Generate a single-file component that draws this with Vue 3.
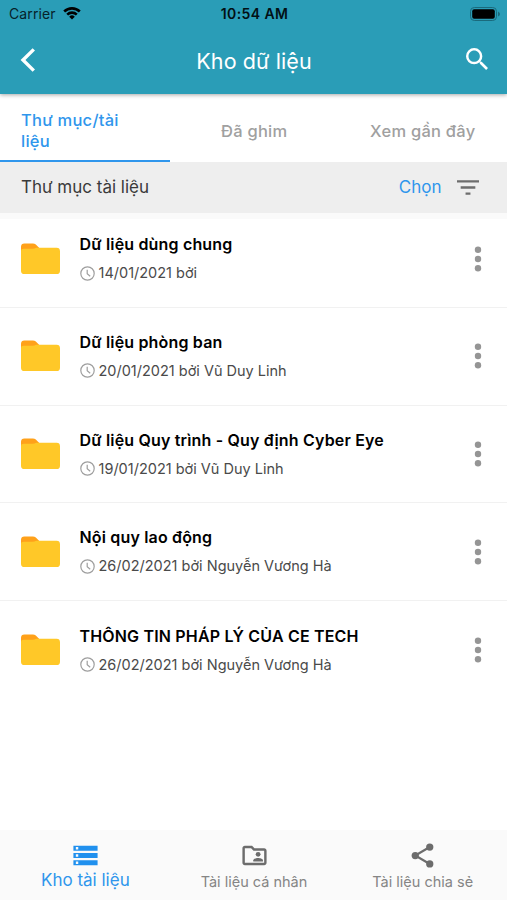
<template>
  <div class="screen">
    <header class="header">
      <div class="status">
        <div class="carrier">
          <span>Carrier</span>
          <svg class="wifi" viewBox="0 0 18 14">
            <path d="M0.3 4.6a12.4 12.4 0 0 1 17.4 0l-1.8 1.9a9.8 9.8 0 0 0-13.8 0z" />
            <path d="M3.3 7.7a8.1 8.1 0 0 1 11.4 0l-1.8 1.9a5.5 5.5 0 0 0-7.8 0z" />
            <path d="M6.2 10.7a4 4 0 0 1 5.6 0L9 13.6z" />
          </svg>
        </div>
        <span class="clock">10:54 AM</span>
        <svg class="battery" viewBox="0 0 30 14">
          <rect class="shell" x="0.5" y="0.5" width="26" height="13" rx="3.8" />
          <rect x="2.2" y="2.2" width="22.6" height="9.6" rx="2" />
          <path class="tip" d="M28 4.5q2 1 2 2.5t-2 2.5z" />
        </svg>
      </div>
      <div class="navbar">
        <svg class="back" viewBox="0 0 16 24">
          <path d="M13.8 1.4L3 12l10.800 10.600" />
        </svg>
        <h1>Kho dữ liệu</h1>
        <svg class="search" viewBox="3 3 17.5 17.5">
          <path d="M15.5 14h-.79l-.28-.27A6.471 6.471 0 0 0 16 9.5 6.5 6.5 0 1 0 9.5 16c1.61 0 3.09-.59 4.23-1.57l.27.28v.79l5 4.99L20.49 19l-4.99-5zm-6 0C7.01 14 5 11.99 5 9.5S7.01 5 9.5 5 14 7.01 14 9.5 11.99 14 9.5 14z" />
        </svg>
      </div>
    </header>

    <nav class="tabs">
      <div v-for="(tab, i) in tabs" :key="tab" class="tab" :class="{ active: i === activeTab }" @click="activeTab = i">
        <span>{{ tab }}</span>
      </div>
    </nav>

    <div class="toolbar">
      <span class="path">Thư mục tài liệu</span>
      <span class="select">Chọn</span>
      <svg class="filter" viewBox="3 6 18 12">
        <path d="M10 18h4v-2h-4v2zM3 6v2h18V6H3zm3 7h12v-2H6v2z" />
      </svg>
    </div>

    <main class="list">
      <div v-for="folder in folders" :key="folder.name" class="row">
        <svg class="folder" viewBox="0 0 40 32">
          <path class="flap" d="M0 10V3.5Q0 0 3.5 0h8.7q1.800 0 3 1.200L19 5v5z" />
          <path class="body" d="M0 8Q0 5.500 3 5.500L12 5.500Q14 5.500 15.500 4.500H36.500Q40 4.500 40 8V28Q40 31.500 36.500 31.500H3.500Q0 31.500 0 28z" />
        </svg>
        <div class="info">
          <div class="name">{{ folder.name }}</div>
          <div class="meta">
            <svg class="time" viewBox="0 0 15 15">
              <circle cx="7.500" cy="7.500" r="6.700" />
              <path d="M7.200 3.700v4.100l3 2.400" />
            </svg>
            <span>{{ folder.date }} bởi {{ folder.author }}</span>
          </div>
        </div>
        <svg class="more" viewBox="0 0 8 26">
          <circle cx="4" cy="3.700" r="3.200" />
          <circle cx="4" cy="13" r="3.200" />
          <circle cx="4" cy="22.300" r="3.200" />
        </svg>
      </div>
    </main>

    <footer class="bottom">
      <div class="item current">
        <svg viewBox="0 0 24 24">
          <path d="M2 20h20v-4H2v4zm2-3h2v2H4v-2zM2 4v4h20V4H2zm4 3H4V5h2v2zm-4 7h20v-4H2v4zm2-3h2v2H4v-2z" />
        </svg>
        <span>Kho tài liệu</span>
      </div>
      <div class="item">
        <svg viewBox="0 0 24 24">
          <path d="M20 6h-8l-2-2H4c-1.100 0-2 .9-2 2v12c0 1.100.9 2 2 2h16c1.100 0 2-.9 2-2V8c0-1.100-.9-2-2-2zm0 12H4V6h5.170l2 2H20v10z" />
          <circle cx="15" cy="11" r="2" />
          <path d="M11 17v-1c0-1.330 2.670-2 4-2s4 .67 4 2v1z" />
        </svg>
        <span>Tài liệu cá nhân</span>
      </div>
      <div class="item">
        <svg viewBox="0 0 24 24">
          <path class="link" d="M18 5L6 12l12 7" />
          <circle cx="18" cy="5" r="3" />
          <circle cx="6" cy="12" r="3" />
          <circle cx="18" cy="19" r="3" />
        </svg>
        <span>Tài liệu chia sẻ</span>
      </div>
    </footer>
  </div>
</template>

<script setup>
import { ref } from "vue";

const tabs = ["Thư mục/tài liệu", "Đã ghim", "Xem gần đây"];
const activeTab = ref(0);

const folders = [
  { name: "Dữ liệu dùng chung", date: "14/01/2021", author: "" },
  { name: "Dữ liệu phòng ban", date: "20/01/2021", author: "Vũ Duy Linh" },
  { name: "Dữ liệu Quy trình - Quy định Cyber Eye", date: "19/01/2021", author: "Vũ Duy Linh" },
  { name: "Nội quy lao động", date: "26/02/2021", author: "Nguyễn Vương Hà" },
  { name: "THÔNG TIN PHÁP LÝ CỦA CE TECH", date: "26/02/2021", author: "Nguyễn Vương Hà" },
];
</script>

<style>
body {
  background: #fff;
}
</style>

<style scoped>
.screen {
  display: flex;
  flex-direction: column;
  height: 900px;
  font-family: Inter, "Noto Sans", sans-serif;
  background: #fff;
  overflow: hidden;
}
svg {
  display: block;
  flex: none;
}

.header {
  position: relative;
  flex: none;
  height: 94px;
  background: #2a9db7;
  box-shadow: 0 1px 4px rgba(0, 0, 0, 0.35);
}
.status {
  display: grid;
  grid-template-columns: 1fr auto 1fr;
  align-items: center;
  height: 27px;
  padding: 0 7px 0 9px;
  font-size: 14px;
  color: #06222a;
}
.carrier {
  display: flex;
  align-items: center;
  gap: 7px;
  letter-spacing: 0.1px;
}
.wifi {
  width: 18px;
  height: 14px;
  margin-top: -2px;
  fill: #000;
}
.clock {
  font-weight: 600;
  letter-spacing: 0.4px;
  color: #021015;
}
.battery {
  width: 30px;
  height: 14px;
  justify-self: end;
}
.battery .shell {
  fill: none;
  stroke: #1a6a7c;
}
.battery .tip {
  fill: #1a6a7c;
}
.navbar {
  display: grid;
  grid-template-columns: 1fr auto 1fr;
  align-items: center;
  height: 67px;
  padding: 0 19px 1px 20px;
}
.back {
  width: 16px;
  height: 24px;
  margin-bottom: 2px;
  fill: none;
  stroke: #fff;
  stroke-width: 3.4;
}
h1 {
  margin: 0;
  font-size: 21.5px;
  font-weight: 400;
  letter-spacing: 0.1px;
  color: #fff;
}
.search {
  width: 22px;
  height: 22px;
  margin-bottom: 3px;
  justify-self: end;
  fill: #fff;
}

.tabs {
  display: flex;
  flex: none;
  height: 68px;
}
.tab {
  display: flex;
  flex: 1;
  align-items: center;
  justify-content: center;
  box-sizing: border-box;
  padding: 8px 21px 0;
  font-size: 16.5px;
  font-weight: 500;
  line-height: 21px;
  letter-spacing: 0.25px;
  white-space: nowrap;
  color: #a0a0a0;
  border-bottom: 2px solid transparent;
}
.tab.active {
  flex: 0 0 170px;
  justify-content: flex-start;
  white-space: normal;
  color: #2f96ec;
  border-bottom-color: #2f96ec;
}

.toolbar {
  display: flex;
  flex: none;
  align-items: center;
  height: 51px;
  box-sizing: border-box;
  padding: 0 28px 0 21px;
  font-size: 17px;
  color: #3a3a3a;
  background: #eee;
}
.path {
  flex: 1;
}
.select {
  margin-right: 15.5px;
  color: #2f96ec;
}
.path,
.select {
  padding-bottom: 1px;
}
.filter {
  width: 22px;
  height: 15px;
  fill: #6d6d6d;
}

.list {
  flex: 1;
  border-top: 6px solid #fafafa;
}
.row {
  display: flex;
  align-items: center;
  box-sizing: border-box;
  height: 97.75px;
  padding: 0.5px 25.5px 0 20.5px;
  border-bottom: 1px solid #f1f1f1;
}
/* the first row gives up the height of the strip above it */
.row:first-child {
  height: 88.75px;
  padding-top: 0;
  padding-bottom: 8.5px;
}
.row:last-child {
  border-bottom: none;
}
.folder {
  width: 39px;
  height: 32px;
}
.flap {
  fill: #ffa11a;
}
.body {
  fill: #ffc828;
}
.info {
  flex: 1;
  margin-left: 20px;
}
.name {
  font-size: 16px;
  font-weight: 600;
  line-height: 20px;
  letter-spacing: 0.17px;
  color: #000;
}
.meta {
  display: flex;
  align-items: center;
  gap: 4px;
  margin-top: 9px;
  font-size: 14.5px;
  line-height: 20px;
  color: #4a4a4a;
}
.time {
  width: 15px;
  height: 15px;
  fill: none;
  stroke: #9e9e9e;
  stroke-width: 1.2;
}
.more {
  width: 8px;
  height: 26px;
  fill: #959595;
}

.bottom {
  display: flex;
  flex: none;
  height: 70px;
  background: #fafafa;
}
.item {
  display: flex;
  flex: 1;
  flex-direction: column;
  align-items: center;
  padding-top: 11px;
  font-size: 14.5px;
  color: #858585;
}
.item svg {
  width: 29px;
  height: 29px;
  fill: #6c6c6c;
}
.item span {
  line-height: 23px;
}
.item .link {
  fill: none;
  stroke: #6c6c6c;
  stroke-width: 1.8;
}
.item.current {
  padding-left: 1px;
  font-size: 17px;
  color: #2f96ec;
}
.item.current svg {
  fill: #2090ee;
}
.item.current span {
  line-height: 20px;
}
</style>
